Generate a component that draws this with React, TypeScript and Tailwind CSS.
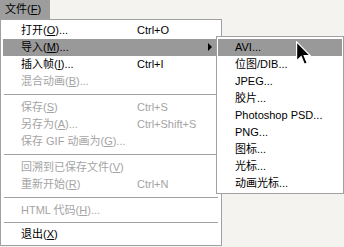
import React from 'react';

type Item =
    | { kind: 'row'; label: string; key?: string; tail?: string; shortcut?: string; disabled?: boolean; active?: boolean; sub?: boolean }
    | { kind: 'sep'; h: string };

const items: Item[] = [
    { kind: 'row', label: '打开', key: 'O', tail: '...', shortcut: 'Ctrl+O' },
    { kind: 'row', label: '导入', key: 'M', tail: '...', active: true, sub: true },
    { kind: 'row', label: '插入帧', key: 'I', tail: '...', shortcut: 'Ctrl+I' },
    { kind: 'row', label: '混合动画', key: 'B', tail: '...', disabled: true },
    { kind: 'sep', h: 'h-[9px]' },
    { kind: 'row', label: '保存', key: 'S', shortcut: 'Ctrl+S', disabled: true },
    { kind: 'row', label: '另存为', key: 'A', tail: '...', shortcut: 'Ctrl+Shift+S', disabled: true },
    { kind: 'row', label: '保存 GIF 动画为', key: 'G', tail: '...', disabled: true },
    { kind: 'sep', h: 'h-[9px]' },
    { kind: 'row', label: '回溯到已保存文件', key: 'V', disabled: true },
    { kind: 'row', label: '重新开始', key: 'R', shortcut: 'Ctrl+N', disabled: true },
    { kind: 'sep', h: 'h-[9px]' },
    { kind: 'row', label: 'HTML 代码', key: 'H', tail: '...', disabled: true },
    { kind: 'sep', h: 'h-[7px]' },
    { kind: 'row', label: '退出', key: 'X' },
];

const subItems = ['AVI...', '位图/DIB...', 'JPEG...', '胶片...', 'Photoshop PSD...', 'PNG...', '图标...', '光标...', '动画光标...'];

function Cursor() {
    return (
        <svg width="15" height="25" viewBox="0 0 12.5 20.5" className="absolute left-[296px] top-[41px]">
            <path d="M0.5 0.5 L0.5 16.5 L4.3 12.8 L7 19.3 L9.4 18.3 L6.8 12 L11.8 12 Z" fill="#000" stroke="#fff" strokeWidth="1" strokeLinejoin="miter" />
        </svg>
    );
}

export default function App() {
    return (
        <div className="relative w-[344px] h-[247px] overflow-hidden bg-[#f4f3ef] text-[11px] text-black" style={{ fontFamily: '"Liberation Sans", "Noto Sans CJK SC", sans-serif' }}>
            <div className="flex h-[19px]">
                <div className="flex w-[50px] items-center bg-[#9d9d9d] pl-[5px]">
                    文件(<span className="underline underline-offset-1">F</span>)
                </div>
            </div>

            <div className="relative">
                <div className="w-[222px] border border-[#a0a0a0] bg-white pt-[2px] pb-[2px]">
                    {items.map((it, i) => {
                        if (it.kind === 'sep') {
                            return (
                                <div key={i} className={`${it.h} flex items-center px-[3px]`}>
                                    <div className="h-px w-full bg-[#a0a0a0]" />
                                </div>
                            );
                        }
                        return (
                            <div
                                key={i}
                                className={`relative mx-[2px] flex h-[17px] items-center pl-[18px] ${it.active ? 'bg-[#999999]' : ''} ${it.disabled ? 'text-[#a4a4a4]' : 'text-black'}`}
                            >
                                <span className="w-[116px] whitespace-nowrap">
                                    {it.label}(<span className="underline underline-offset-1">{it.key}</span>){it.tail}
                                </span>
                                {it.shortcut && <span className="whitespace-nowrap">{it.shortcut}</span>}
                                {it.sub && (
                                    <svg width="5" height="8" viewBox="0 0 5 8" className="absolute left-[205px] top-[4px]">
                                        <path d="M0 0 L4 4 L0 8 Z" fill="#000" />
                                    </svg>
                                )}
                            </div>
                        );
                    })}
                </div>

                <div className="absolute left-[216px] top-[17px] w-[128px] border border-[#a0a0a0] bg-white pt-[2px] pb-px">
                    {subItems.map((s, i) => (
                        <div key={s} className={`mx-px flex h-[17px] items-center pl-[17px] whitespace-nowrap ${i === 0 ? 'bg-[#999999]' : ''}`}>
                            {s}
                        </div>
                    ))}
                </div>
            </div>

            <Cursor />
        </div>
    );
}
